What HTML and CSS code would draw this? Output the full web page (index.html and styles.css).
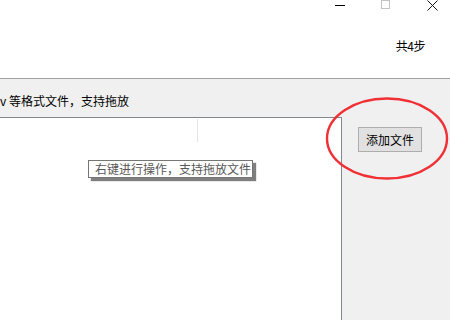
FILE: index.html
```html
<!DOCTYPE html>
<html>
<head>
<meta charset="utf-8">
<link rel="stylesheet" href="styles.css">
</head>
<body>
<div class="window">
  <header class="header">
    <div class="caption">
      <span class="cap-btn">
        <svg width="10" height="10" viewBox="0 0 10 10"><line x1="0" y1="5.5" x2="10" y2="5.5" stroke="#000" stroke-width="1"/></svg>
      </span>
      <span class="cap-btn">
        <svg width="10" height="10" viewBox="0 0 10 10"><rect x="0.5" y="0.5" width="8" height="8" fill="none" stroke="#c4c4c4" stroke-width="1"/></svg>
      </span>
      <span class="cap-btn">
        <svg width="11" height="11" viewBox="0 0 11 11"><path d="M0.5 0.5 L10.5 10.5 M10.5 0.5 L0.5 10.5" stroke="#111" stroke-width="1" fill="none"/></svg>
      </span>
    </div>
    <div class="steps">共4步</div>
  </header>
  <main class="main">
    <section class="left">
      <div class="label">v 等格式文件，支持拖放</div>
      <div class="panel">
        <div class="panel-head"><div class="col"></div></div>
      </div>
    </section>
    <section class="right">
      <button class="add-btn">添加文件</button>
    </section>
  </main>
  <div class="tooltip">右键进行操作，支持拖放文件</div>
  <svg class="ring" width="130" height="90" viewBox="0 0 130 90">
    <ellipse cx="65" cy="44.5" rx="60" ry="40" fill="none" stroke="#f03035" stroke-width="2.4"/>
  </svg>
</div>
</body>
</html>
```

FILE: styles.css
```css
html, body {
  margin: 0;
  padding: 0;
  background: #ffffff;
}
body {
  font-family: "Noto Sans CJK SC", "Noto Sans", sans-serif;
  font-size: 12px;
  color: #000;
}
.window {
  position: relative;
  width: 450px;
  height: 320px;
  overflow: hidden;
  display: flex;
  flex-direction: column;
}
.header {
  height: 78px;
  border-bottom: 1px solid #a0a0a0;
  display: flex;
  flex-direction: column;
  background: #fff;
}
.caption {
  display: flex;
  justify-content: flex-end;
  margin-right: -5px;
  height: 11px;
}
.cap-btn {
  width: 46px;
  height: 11px;
  display: flex;
  justify-content: center;
  align-items: flex-start;
}
.cap-btn svg { display: block; }
.steps {
  align-self: flex-end;
  margin-top: 27px;
  margin-right: 25px;
  line-height: 16px;
  font-size: 12px;
  letter-spacing: -0.5px;
}
.main {
  flex: 1;
  display: flex;
  background: #f0f0f0;
}
.left {
  width: 342px;
  display: flex;
  flex-direction: column;
}
.label {
  height: 38px;
  line-height: 16px;
  padding-top: 14px;
  box-sizing: border-box;
  white-space: nowrap;
  font-size: 12px;
  margin-left: 0;
}
.panel {
  flex: 1;
  background: #fff;
  border-top: 1px solid #828790;
  border-right: 1px solid #828790;
}
.panel-head {
  padding-top: 1px;
  display: flex;
}
.col {
  width: 197px;
  height: 23px;
  border-right: 1px solid #e5e5e5;
}
.right {
  flex: 1;
  padding-top: 48px;
  padding-left: 16px;
}
.add-btn {
  width: 64px;
  height: 25px;
  background: #e1e1e1;
  border: 1px solid #adadad;
  border-radius: 0;
  font-family: "Noto Sans CJK SC", sans-serif;
  font-size: 12px;
  color: #000;
  padding: 0;
  line-height: 16px;
}
.tooltip {
  position: absolute;
  left: 88px;
  top: 160px;
  width: 165px;
  height: 18px;
  box-sizing: border-box;
  border: 1px solid #767676;
  background: #fff;
  color: #575757;
  font-size: 12px;
  line-height: 16px;
  padding-left: 6px;
  white-space: nowrap;
  box-shadow: 3px 3px 1px rgba(0, 0, 0, 0.5);
}
.ring {
  position: absolute;
  left: 322px;
  top: 94px;
}
```
